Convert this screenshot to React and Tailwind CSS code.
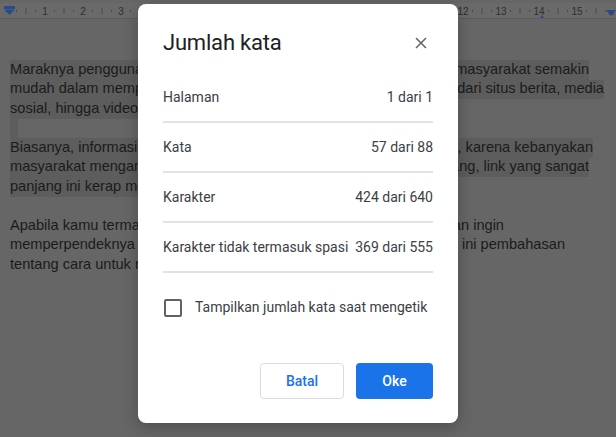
import React from "react";

const ticks = [];
for (let n = 0; n <= 16; n++) {
  const x0 = 7 + n * 38;
  [0.25, 0.5, 0.75].forEach((f, i) => {
    const x = x0 + f * 38;
    ticks.push(
      <line key={`${n}-${i}`} x1={x} x2={x} y1={i === 1 ? 8 : 10} y2={i === 1 ? 14 : 12} stroke="#4a4a4a" strokeWidth="1" />
    );
  });
}

function Ruler() {
  const nums = [];
  for (let n = 1; n <= 15; n++) {
    nums.push(
      <text key={n} x={45 + (n - 1) * 38} y="15" textAnchor="middle" fontSize="10" fill="#2e2e2e" fontFamily="Arial, sans-serif">
        {n}
      </text>
    );
  }
  return (
    <svg width="616" height="20" className="block">
      <rect x="0" y="0" width="616" height="20" fill="#666666" />
      <rect x="0" y="3" width="616" height="15" fill="#6a6a6a" />
      <line x1="0" x2="616" y1="18.5" y2="18.5" stroke="#5c5c5c" />
      {ticks}
      {nums}
      <path d="M610 11 L610 15 M613 11 L613 15" stroke="#2e2e2e" strokeWidth="1" />
      <rect x="4" y="6" width="11" height="3" fill="#2a4b8a" />
      <polygon points="4,9.5 15,9.5 9.5,15" fill="#2a4b8a" />
      <polygon points="606,10 616,10 611,16" fill="#2a4b8a" />
      <polygon points="540,18 544,18 542,15" fill="#2a4b8a" />
    </svg>
  );
}

function Line({ left, right, end, hl }) {
  return (
    <div className="h-[19.5px] pl-[10px]">
      <div
        className={`flex h-full items-center whitespace-nowrap ${hl ? "bg-[#5d5d5d]" : ""}`}
        style={{ width: end ? end - 10 : 300 }}
      >
        <span className="w-[128px] shrink-0 overflow-hidden">{left}</span>
        {end ? (
          <span className="ml-[320px] flex flex-1 justify-end overflow-hidden">
            <span className="shrink-0">{right}</span>
          </span>
        ) : null}
      </div>
    </div>
  );
}

export default function App() {
  return (
    <div className="relative h-[437px] w-[616px] overflow-hidden bg-[#666666]">
      <Ruler />
      <div className="pt-[40px] text-[14.6px] text-[#1b1b1b]" style={{ fontFamily: '"Liberation Sans", Arial, sans-serif' }}>
        <Line left="Maraknya penggunaan internet" right="n masyarakat semakin" end={589} hl />
        <Line left="mudah dalam memperoleh informasi" right="i dari situs berita, media" end={604} hl />
        <Line left="sosial, hingga video streaming." hl />
        <div className="h-[19.5px] pl-[10px]">
          <div className="h-full w-[8px] bg-[#5d5d5d]" />
        </div>
        <Line left="Biasanya, informasi tersebut" right="t, karena kebanyakan" end={593} hl />
        <Line left="masyarakat mengandalkan" right="ang, link yang sangat" end={589} hl />
        <Line left="panjang ini kerap membuat" hl />
        <div className="h-[19.5px]" />
        <Line left="Apabila kamu termasuk" right="dan ingin" end={504} />
        <Line left="memperpendeknya" right="t ini pembahasan" end={565} />
        <Line left="tentang cara untuk membuat" />
      </div>

      <div
        className="absolute left-[138px] top-[4px] flex h-[419px] w-[320px] flex-col rounded-[8px] bg-white px-[25px] shadow-[0_4px_16px_rgba(0,0,0,0.25)]"
        style={{ fontFamily: 'Roboto, "Noto Sans", Arial, sans-serif' }}
      >
        <div className="flex h-[69px] items-start justify-between pt-[25px]">
          <div className="text-[22px] leading-[28px] tracking-[-0.2px] text-[#202124]">Jumlah kata</div>
          <div className="mr-[4px] flex h-[28px] w-[16px] items-center justify-center">
            <svg width="12" height="12" viewBox="0 0 12 12">
              <path d="M1 1 L11 11 M11 1 L1 11" stroke="#5f6368" strokeWidth="1.5" />
            </svg>
          </div>
        </div>
        {[
          ["Halaman", "1 dari 1"],
          ["Kata", "57 dari 88"],
          ["Karakter", "424 dari 640"],
          ["Karakter tidak termasuk spasi", "369 dari 555"],
        ].map(([a, b]) => (
          <div key={a} className="flex h-[50px] items-center justify-between border-b-2 border-[#e2e3e5] text-[14px] text-[#3c4043]">
            <span>{a}</span>
            <span>{b}</span>
          </div>
        ))}
        <div className="mt-[24px] flex items-center">
          <div className="ml-[1px] h-[18px] w-[18px] rounded-[2px] border-2 border-[#5f6368]" />
          <span className="ml-[13px] text-[14px] text-[#3c4043]">Tampilkan jumlah kata saat mengetik</span>
        </div>
        <div className="mt-auto mb-[24px] flex justify-end gap-[12px]">
          <button className="h-[36px] w-[84px] rounded-[4px] border border-[#dadce0] bg-white text-[14px] font-medium text-[#1a73e8]">
            Batal
          </button>
          <button className="h-[36px] w-[77px] rounded-[4px] bg-[#1a73e8] text-[14px] font-medium text-white">
            Oke
          </button>
        </div>
      </div>
    </div>
  );
}
